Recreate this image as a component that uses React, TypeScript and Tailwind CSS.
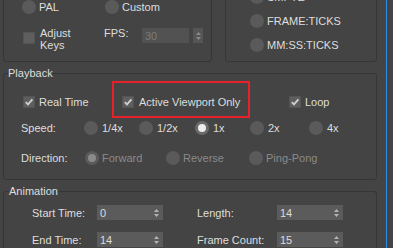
import React from "react";

const Radio = ({ on, dim }: { on?: boolean; dim?: boolean }) => (
  <span
    className={`flex h-[14px] w-[14px] shrink-0 items-center justify-center rounded-full ${
      on && !dim ? "bg-[#6a6a6a]" : "bg-[#5a5a5a]"
    }`}
  >
    {on && (
      <span
        className={`h-[8px] w-[8px] rounded-full ${dim ? "bg-[#8a8a8a]" : "bg-[#ececec]"}`}
      />
    )}
  </span>
);

const Check = ({ on }: { on?: boolean }) => (
  <span className="flex h-[12px] w-[12px] shrink-0 items-center justify-center bg-[#5e5e5e] border border-[#545454]">
    {on && (
      <svg width="10" height="10" viewBox="0 0 10 10">
        <path d="M1.8 5.2 L4 7.4 L8.4 2.4" stroke="#cfcfcf" strokeWidth="1.9" fill="none" />
      </svg>
    )}
  </span>
);

const Spinner = ({ dim }: { dim?: boolean }) => (
  <svg width="5" height="8" viewBox="0 0 5 8">
    <path d="M2.5 0 L5 3 L0 3 Z M0 5 L5 5 L2.5 8 Z" fill={dim ? "#8a8a8a" : "#b4b4b4"} />
  </svg>
);

const NumField = ({ value }: { value: string }) => (
  <div className="flex h-[15px] w-[66px] items-center justify-between bg-[#5b5b5b] pl-[3px] pr-[4px] text-[#dcdcdc]">
    <span>{value}</span>
    <Spinner />
  </div>
);

export default function App() {
  return (
    <div className="relative flex h-[248px] w-[393px] overflow-hidden bg-[#444444] font-['Liberation_Sans',Arial,sans-serif] text-[11px] leading-[16px] text-[#dedede]">
      <div className="w-[386px] shrink-0 pl-[3px] pr-[9px]">
        {/* top groups, cut off by the window */}
        <div className="-mt-[30px] flex h-[92px] gap-[13px]">
          <div className="flex w-[209px] flex-col justify-end gap-[12px] rounded-[3px] border border-[#363636] pb-[10px] pl-[18px]">
            <div className="flex h-[16px] items-center">
              <div className="flex w-[83px] items-center gap-[3px]">
                <Radio />
                <span>PAL</span>
              </div>
              <div className="flex items-center gap-[3px]">
                <Radio />
                <span>Custom</span>
              </div>
            </div>
            <div className="flex h-[24px] items-start">
              <div className="ml-[1px] flex w-[81px] items-start gap-[5px]">
                <span className="mt-[5px]">
                  <Check />
                </span>
                <span className="leading-[12px]">
                  Adjust
                  <br />
                  Keys
                </span>
              </div>
              <span className="w-[38px] leading-[12px]">FPS:</span>
              <div className="mt-[1px] flex h-[15px] w-[47px] items-center bg-[#525252] pl-[3px] text-[#7c7c7c]">
                30
              </div>
              <div className="ml-[4px] mt-[1px] flex h-[15px] w-[10px] items-center justify-center bg-[#555555]">
                <Spinner dim />
              </div>
            </div>
          </div>
          <div className="flex w-[152px] flex-col justify-end gap-[8px] rounded-[3px] border border-[#363636] pb-[8px] pl-[24px]">
            {["SMPTE", "FRAME:TICKS", "MM:SS:TICKS"].map((t) => (
              <div key={t} className="flex h-[16px] items-center gap-[3px]">
                <Radio />
                <span>{t}</span>
              </div>
            ))}
          </div>
        </div>

        {/* Playback */}
        <fieldset className="mt-[3px] rounded-[3px] border border-[#363636] pb-[13px]">
          <legend className="ml-[4px] leading-[16px]">Playback</legend>
          <div className="mt-[13px] flex h-[16px] items-center pl-[19px]">
            <div className="flex w-[99px] items-center gap-[4px]">
              <Check on />
              <span>Real Time</span>
            </div>
            <div className="flex w-[167px] items-center gap-[5px]">
              <Check on />
              <span>Active Viewport Only</span>
            </div>
            <div className="flex items-center gap-[4px]">
              <Check on />
              <span>Loop</span>
            </div>
          </div>
          <div className="mt-[10px] flex h-[16px] items-center pl-[17px]">
            <span className="w-[63px]">Speed:</span>
            {[
              { t: "1/4x", w: "w-[55px]" },
              { t: "1/2x", w: "w-[56px]" },
              { t: "1x", w: "w-[55px]", on: true },
              { t: "2x", w: "w-[59px]" },
              { t: "4x", w: "" },
            ].map((r) => (
              <div key={r.t} className={`flex items-center gap-[4px] ${r.w}`}>
                <Radio on={r.on} />
                <span>{r.t}</span>
              </div>
            ))}
          </div>
          <div className="mt-[14px] flex h-[16px] items-center pl-[17px] text-[#8a8a8a]">
            <span className="w-[64px] text-[#dedede]">Direction:</span>
            <div className="flex w-[81px] items-center gap-[3px]">
              <Radio on dim />
              <span>Forward</span>
            </div>
            <div className="flex w-[83px] items-center gap-[3px]">
              <Radio />
              <span>Reverse</span>
            </div>
            <div className="flex items-center gap-[3px]">
              <Radio />
              <span>Ping-Pong</span>
            </div>
          </div>
        </fieldset>

        {/* Animation */}
        <fieldset className="mt-[3px] rounded-[3px] border border-[#363636] pb-[10px]">
          <legend className="ml-[5px] leading-[16px]">Animation</legend>
          <div className="mt-[6px] flex h-[15px] items-center pl-[28px]">
            <span className="w-[65px]">Start Time:</span>
            <NumField value="0" />
            <span className="ml-[34px] w-[80px]">Length:</span>
            <NumField value="14" />
          </div>
          <div className="mt-[12px] flex h-[15px] items-center pl-[28px]">
            <span className="w-[65px]">End Time:</span>
            <NumField value="14" />
            <span className="ml-[34px] w-[80px]">Frame Count:</span>
            <NumField value="15" />
          </div>
        </fieldset>
      </div>
      <div className="w-px shrink-0 bg-[#2b8de6]" />
      <div className="flex-1" />

      {/* highlight annotation */}
      <div className="absolute left-[112px] top-[81px] h-[37px] w-[138px] border-2 border-[#e8202a]" />
    </div>
  );
}
